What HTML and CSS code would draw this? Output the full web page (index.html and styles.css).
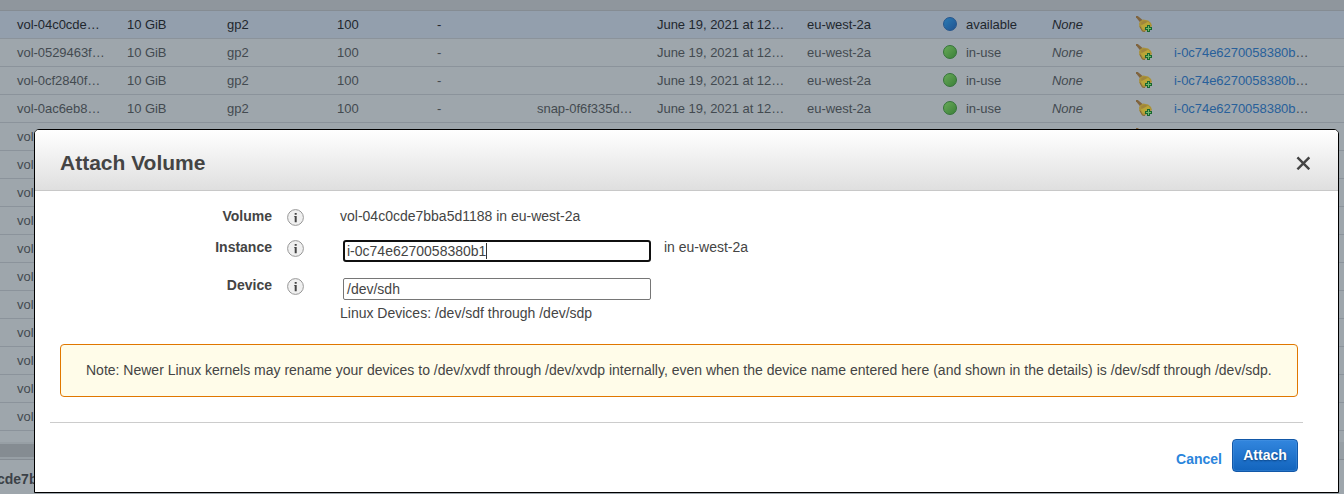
FILE: index.html
```
<!DOCTYPE html>
<html lang="en">
<head>
<meta charset="utf-8">
<title>Attach Volume</title>
<link rel="stylesheet" href="styles.css">
</head>
<body>
<svg class="defs" width="0" height="0">
  <symbol id="bell" viewBox="0 0 16 16">
    <path d="M0 1.2 0 0h1.8l5.4 4.4-2.6 2.6z" fill="#80643e"/>
    <path d="M3 7.6 4.4 5l2.8-1.6 5 1.2 2.8 2.4 1 3-7 5.6-2.8-.2L3.4 11z" fill="#aa9238"/>
    <path d="M5 6.4 8 4.8l3.6.8-5.4 4.6z" fill="#9f853d"/>
    <path d="m4.8 9.6 7.4-3.8 2 2.4-7.2 5.6z" fill="#b9a537"/>
    <path d="m4 10.6 2.6 4.6 2.4.3" fill="none" stroke="#82683f" stroke-width="1"/>
    <path d="M11 9h3v2h2v3h-2v2h-3v-2H9v-3h2z" fill="#17682f"/>
    <path d="M12 10h1v2h2v1h-2v2h-1v-2h-2v-1h2z" fill="#72b66d"/>
  </symbol>
  <symbol id="info" viewBox="0 0 17 17">
    <circle cx="8.5" cy="8.5" r="7.9" fill="#f0f0f0" stroke="#979797" stroke-width="1"/>
    <path d="M7.7 4h2v1.8h-2zM7.1 6.9h2.6v6.3h-2V7.8h-.6z" fill="#444"/>
  </symbol>
</svg>
<main class="volumes">
  <div class="strip"></div>
  <div class="row selected"><span>vol-04c0cde…</span><span>10 GiB</span><span>gp2</span><span>100</span><span>-</span><span></span><span>June 19, 2021 at 12…</span><span>eu-west-2a</span><i class="dot blue"></i><span>available</span><em>None</em><svg class="bell"><use href="#bell"/></svg></div>
  <div class="row"><span>vol-0529463f…</span><span>10 GiB</span><span>gp2</span><span>100</span><span>-</span><span></span><span>June 19, 2021 at 12…</span><span>eu-west-2a</span><i class="dot"></i><span>in-use</span><em>None</em><svg class="bell"><use href="#bell"/></svg><span><a>i-0c74e6270058380b</a>…</span></div>
  <div class="row"><span>vol-0cf2840f…</span><span>10 GiB</span><span>gp2</span><span>100</span><span>-</span><span></span><span>June 19, 2021 at 12…</span><span>eu-west-2a</span><i class="dot"></i><span>in-use</span><em>None</em><svg class="bell"><use href="#bell"/></svg><span><a>i-0c74e6270058380b</a>…</span></div>
  <div class="row"><span>vol-0ac6eb8…</span><span>10 GiB</span><span>gp2</span><span>100</span><span>-</span><span>snap-0f6f335d…</span><span>June 19, 2021 at 12…</span><span>eu-west-2a</span><i class="dot"></i><span>in-use</span><em>None</em><svg class="bell"><use href="#bell"/></svg><span><a>i-0c74e6270058380b</a>…</span></div>
  <div class="row"><span>vol</span><span></span><span></span><span></span><span></span><span></span><span></span><span></span><span></span><span></span><span></span><svg class="bell"><use href="#bell"/></svg></div>
  <div class="row"><span>vol</span></div>
  <div class="row"><span>vol</span></div>
  <div class="row"><span>vol</span></div>
  <div class="row"><span>vol</span></div>
  <div class="row"><span>vol</span></div>
  <div class="row"><span>vol</span></div>
  <div class="row"><span>vol</span></div>
  <div class="row"><span>vol</span></div>
  <div class="row"><span>vol</span></div>
  <div class="row"><span>vol</span></div>
  <div class="scroll"><div class="thumb"></div></div>
  <div class="detail">cde7b</div>
</main>
<section class="modal" role="dialog">
  <header class="head">
    <h1>Attach Volume</h1>
    <svg class="close" width="14" height="14" viewBox="0 0 14 14"><path d="m1.4 1.4 11.9 11.9M13.3 1.4 1.4 13.3" stroke="#444" stroke-width="2.4"/></svg>
  </header>
  <div class="form">
    <div class="field"><b>Volume</b><svg class="info"><use href="#info"/></svg><span>vol-04c0cde7bba5d1188 in eu-west-2a</span></div>
    <div class="field instance"><b>Instance</b><svg class="info"><use href="#info"/></svg><div class="input focus">i-0c74e6270058380b1<i class="caret"></i></div><span class="zone">in eu-west-2a</span></div>
    <div class="field device"><b>Device</b><svg class="info"><use href="#info"/></svg><div class="input">/dev/sdh</div></div>
    <p class="hint">Linux Devices: /dev/sdf through /dev/sdp</p>
  </div>
  <div class="note">Note: Newer Linux kernels may rename your devices to /dev/xvdf through /dev/xvdp internally, even when the device name entered here (and shown in the details) is /dev/sdf through /dev/sdp.</div>
  <footer class="foot"><a class="cancel">Cancel</a><div class="attach">Attach</div></footer>
</section>
</body>
</html>
```
FILE: styles.css
```
* { box-sizing: border-box; }
body {
  margin: 0;
  width: 1344px;
  height: 494px;
  overflow: hidden;
  position: relative;
  background: #9ea6ac;
  font-family: "Liberation Sans", Arial, sans-serif;
  font-size: 14px;
  color: #444;
}
.defs { position: absolute; }

.volumes { height: 494px; overflow: hidden; font-size: 13px; color: #434a50; }
.strip { height: 11px; background: #8f969d; border-bottom: 1px solid #858c93; }
.row {
  height: 28px;
  padding-left: 17px;
  border-bottom: 1px solid #8b939b;
  display: grid;
  grid-template-columns: 110px 100px 110px 100px 100px 120px 150px 136px 23px 86px 84px 38px 150px;
  line-height: 27px;
  letter-spacing: -0.04px;
  white-space: nowrap;
}
.row.selected { background: #939fad; color: #1f272e; }
.row a { color: #28609a; }
.dot {
  width: 14px;
  height: 14px;
  margin-top: 6px;
  border-radius: 50%;
  border: 1px solid #337337;
  background: linear-gradient(135deg, #68aa58, #3c8039);
}
.dot.blue { border-color: #24558c; background: linear-gradient(135deg, #2a7bb4, #205391); }
.bell { width: 16px; height: 16px; margin: 5px 0 0; }
.scroll {
  height: 28px;
  padding-top: 13px;
  background: linear-gradient(transparent 11px, #979fa5 11px);
}
.thumb { width: 100px; height: 13px; background: #858c92; }
.detail {
  height: 35px;
  border-top: 1px solid #858c93;
  margin-left: -3px;
  font-size: 14px;
  font-weight: bold;
  line-height: 38px;
  color: #3a4147;
}

.modal {
  position: absolute;
  left: 34px;
  top: 129px;
  width: 1305px;
  height: 364px;
  border: 1px solid #000;
  border-radius: 5px 5px 0 0;
  background: #fff;
  overflow: hidden;
}
.head {
  height: 61px;
  padding: 0 28px 0 25px;
  display: flex;
  align-items: center;
  justify-content: space-between;
  background: linear-gradient(#fff, #dfdfdf);
  border-bottom: 1px solid #c8c8c8;
}
h1 { margin: 6px 0 0; font-size: 21px; line-height: 24px; }
.close { margin-top: 6px; }
.form { height: 153px; padding-top: 17px; }
.field { display: flex; align-items: flex-start; height: 31px; line-height: 16px; }
.field b { width: 237px; text-align: right; }
.info { width: 17px; height: 17px; margin: 1px 35px 0 15px; }
.field > span { margin-left: 1px; }
.field.instance { height: 38px; }
.field.device { height: 28px; }
.input {
  width: 308px;
  height: 22px;
  margin: 1px 0 0 4px;
  border: 1px solid #767676;
  border-radius: 2px;
  padding-left: 3px;
  line-height: 21px;
  display: flex;
  align-items: center;
}
.input.focus { border: 2px solid #101010; border-radius: 3px; padding-left: 2px; line-height: 18px; }
.caret { width: 1px; height: 16px; margin-left: -.4px; background: #333; }
.field .zone { margin-left: 13px; }
.hint { margin: 0 0 0 305px; line-height: 16px; }
.note {
  width: 1238px;
  height: 53px;
  margin-left: 25px;
  padding-left: 25px;
  line-height: 51px;
  border: 1px solid #e07700;
  border-radius: 4px;
  background: #fffce9;
  white-space: nowrap;
}
.foot {
  width: 1253px;
  margin: 25px 0 0 15px;
  padding: 16px 5px 0 0;
  border-top: 1px solid #ccc;
  display: flex;
  justify-content: flex-end;
  font-weight: bold;
}
.cancel { color: #2a85dc; line-height: 16px; margin: 12px 10px 0 0; }
.attach {
  width: 66px;
  height: 33px;
  border: 1px solid #1258a8;
  border-radius: 4px;
  background: linear-gradient(#3286de, #1264bd);
  box-shadow: inset 0 0 0 1px rgba(90, 160, 230, .3);
  color: #fff;
  text-align: center;
  line-height: 31px;
  text-shadow: 0 1px 2px #083c78;
}
```
